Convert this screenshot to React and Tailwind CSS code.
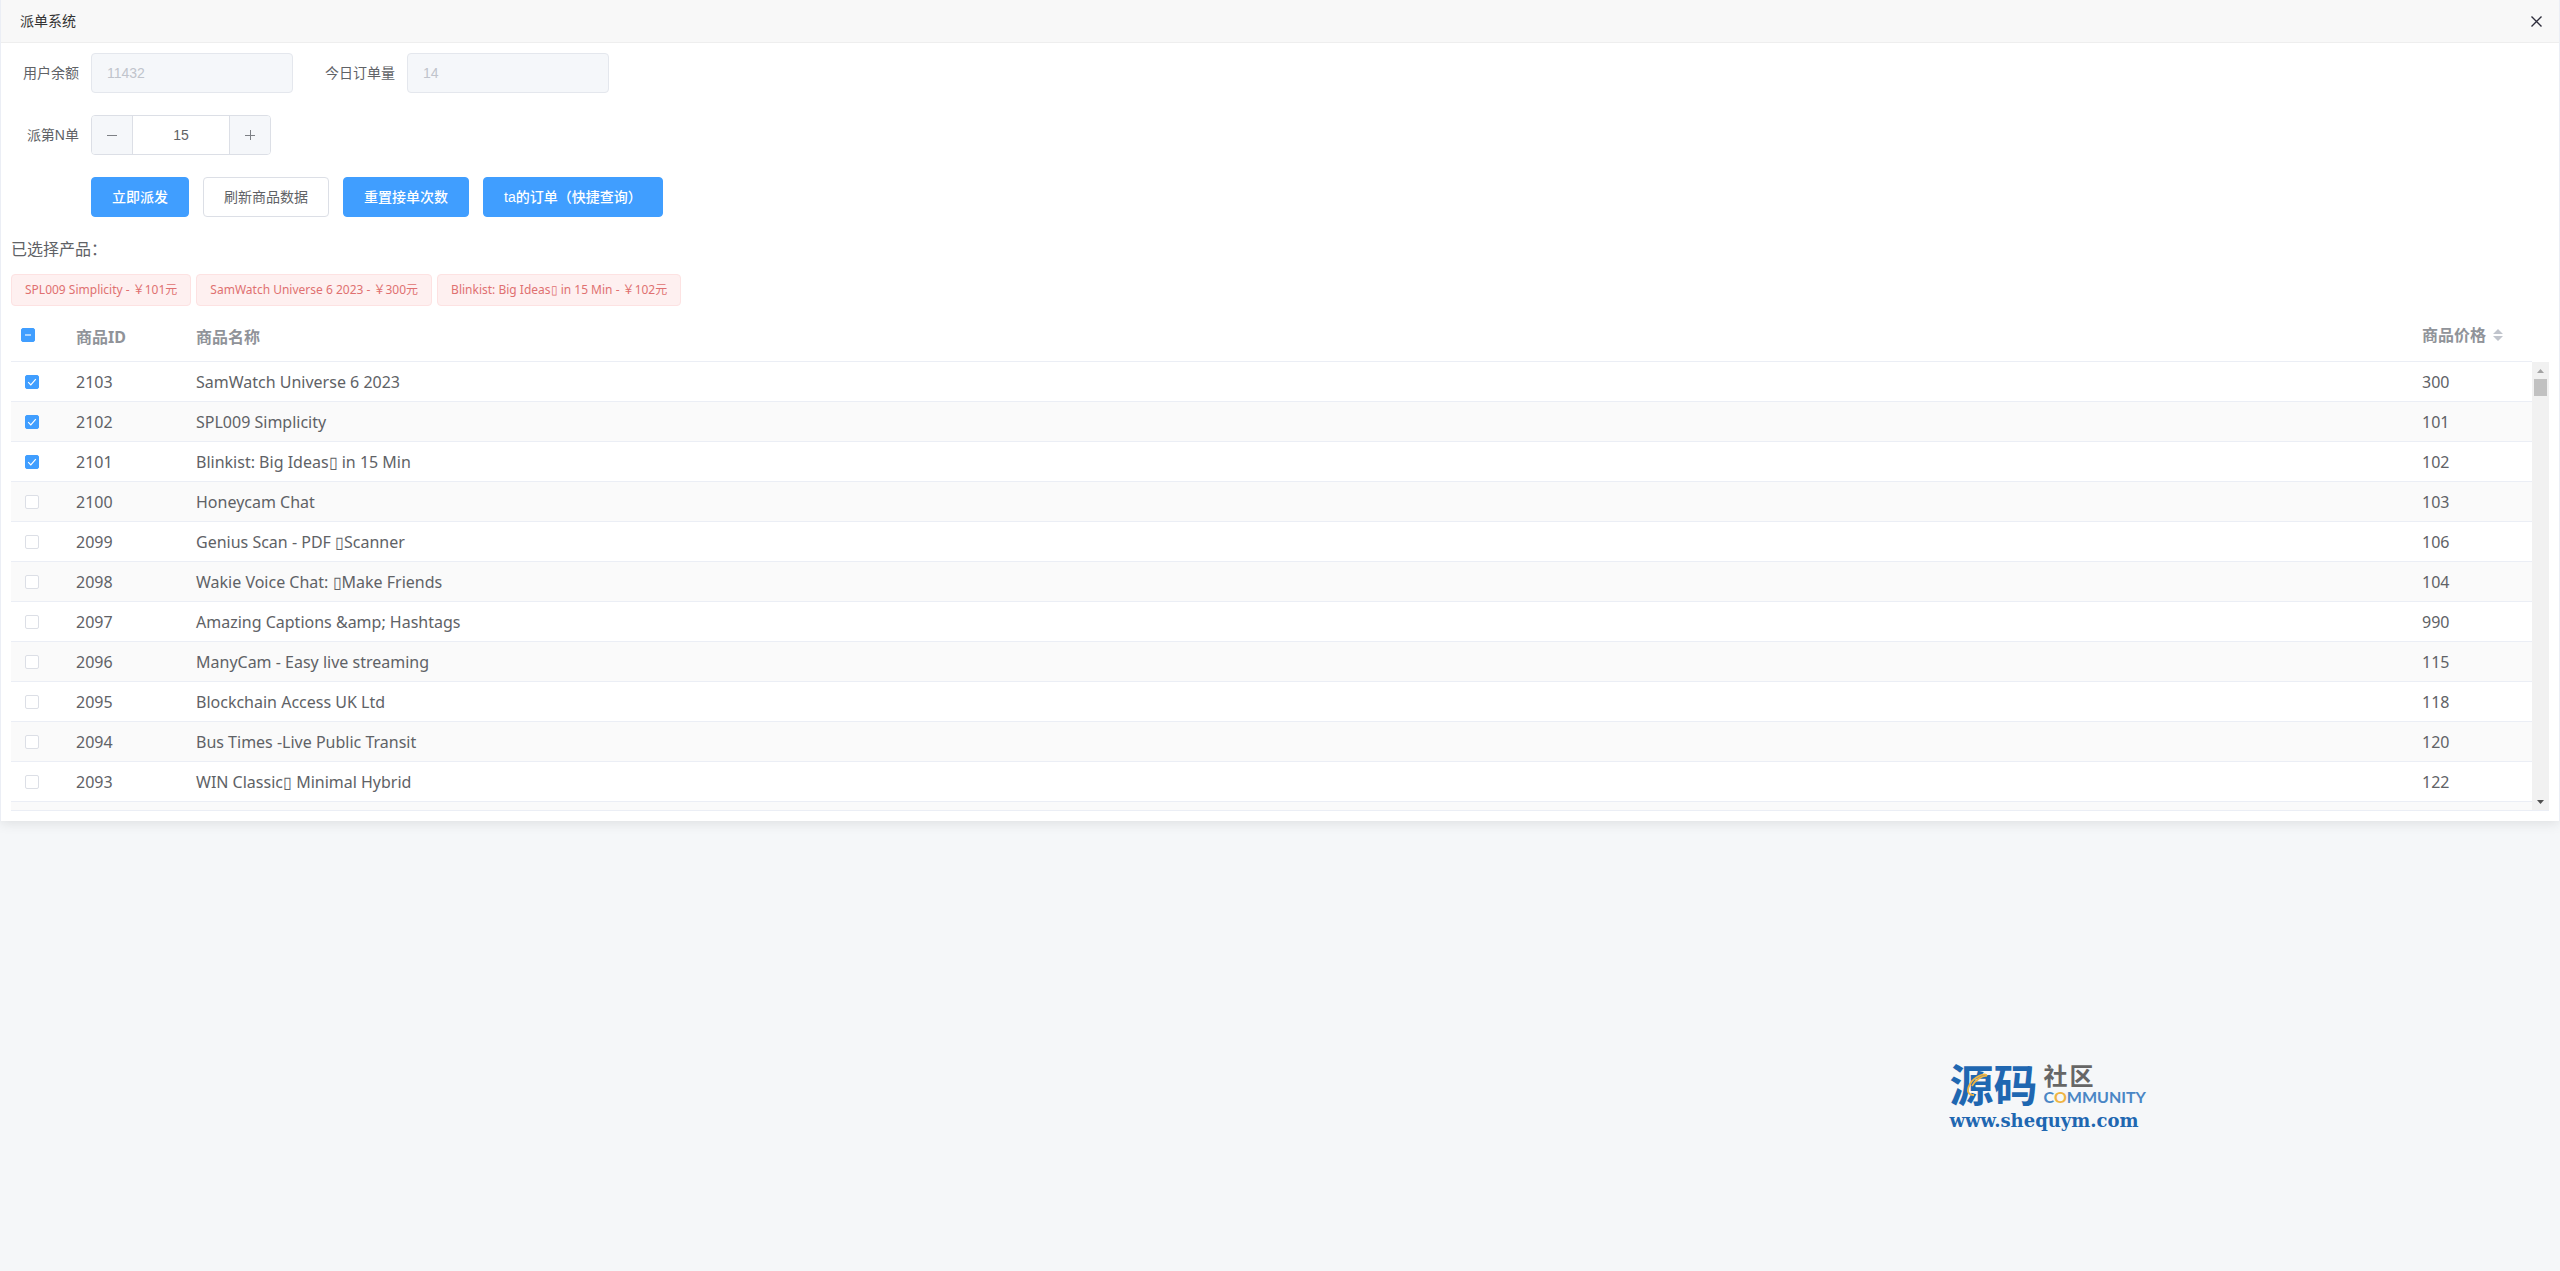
import React, { useState } from 'react';

const products = [
  { id: 2103, name: 'SamWatch Universe 6 2023', price: 300 },
  { id: 2102, name: 'SPL009 Simplicity', price: 101 },
  { id: 2101, name: 'Blinkist: Big Ideas▯ in 15 Min', price: 102 },
  { id: 2100, name: 'Honeycam Chat', price: 103 },
  { id: 2099, name: 'Genius Scan - PDF ▯Scanner', price: 106 },
  { id: 2098, name: 'Wakie Voice Chat: ▯Make Friends', price: 104 },
  { id: 2097, name: 'Amazing Captions &amp; Hashtags', price: 990 },
  { id: 2096, name: 'ManyCam - Easy live streaming', price: 115 },
  { id: 2095, name: 'Blockchain Access UK Ltd', price: 118 },
  { id: 2094, name: 'Bus Times -Live Public Transit', price: 120 },
  { id: 2093, name: 'WIN Classic▯ Minimal Hybrid', price: 122 },
];

const Checkbox = ({ checked, indeterminate, onChange, label }) => {
  const on = checked || indeterminate;
  return (
    <span className="grid w-3.5 h-3.5">
      <input
        type="checkbox"
        aria-label={label}
        checked={checked}
        onChange={onChange}
        className={`col-start-1 row-start-1 appearance-none w-3.5 h-3.5 rounded-xs border ${
          on ? 'bg-[#409eff] border-[#409eff]' : 'bg-white border-[#dcdfe6]'
        }`}
      />
      {on && (
        <svg className="col-start-1 row-start-1 w-3.5 h-3.5 pointer-events-none" viewBox="0 0 14 14" fill="none" stroke="white">
          {indeterminate ? (
            <path d="M4 7h6" strokeWidth="1.4" opacity="0.8" />
          ) : (
            <path d="M3.2 7.2l2.6 2.6 5-5.6" strokeWidth="1.2" />
          )}
        </svg>
      )}
    </span>
  );
};

const Logo = () => (
  <a href="#" className="flex flex-col text-[#1f67b1]">
    <span className="flex items-start gap-1.5">
      <span className="relative text-[44px] leading-11 font-bold">
        源码
        <svg className="absolute left-4 top-2 w-6 h-7" viewBox="0 0 24 28" fill="none" stroke="#efb443" strokeWidth="1.8">
          <path d="M21 3C19-1 8 4 4 11c-4 7-2 11 4 11M21 3C17 2 9 7 6 13" />
        </svg>
      </span>
      <span className="flex flex-col">
        <span className="flex gap-0.5 text-2xl leading-6 font-bold text-[#666]">
          <span>社</span>
          <span>区</span>
        </span>
        <span className="font-['Lato'] text-base leading-4 font-bold text-[#4a86c5]">
          C<span className="text-[#efb443]">O</span>MMUNITY
        </span>
      </span>
    </span>
    <span className="font-['DejaVu_Serif'] text-lg leading-6 font-bold">www.shequym.com</span>
  </a>
);

const primaryButton = 'h-10 px-5 rounded bg-[#409eff] border border-[#409eff] text-white font-medium';

const App = () => {
  const [count, setCount] = useState(15);
  const [selected, setSelected] = useState([2102, 2103, 2101]);

  const toggle = (id) =>
    setSelected(selected.includes(id) ? selected.filter((s) => s !== id) : [...selected, id]);

  const allChecked = selected.length === products.length;
  const toggleAll = () => setSelected(allChecked ? [] : products.map((p) => p.id));

  return (
    <div className="min-h-screen bg-[#f5f7f9] text-sm text-[#606266] font-['Liberation_Sans','Noto_Sans_CJK_SC',sans-serif]">
      <main className="bg-white border-x border-[#ebeef5] shadow-[0_2px_12px_0_rgba(0,0,0,0.1)]">
        {/* Title bar */}
        <header className="h-[43px] pl-[19px] pr-3.5 flex items-center justify-between bg-[#f8f8f8] border-b border-[#eee] text-[#333]">
          <h1>派单系统</h1>
          <button type="button" aria-label="关闭">
            <svg className="w-4 h-4" viewBox="0 0 16 16" fill="none" stroke="#2d2c3b" strokeWidth="1.4">
              <path d="M2.500 3.500l10 10M12.500 3.500l-10 10" />
            </svg>
          </button>
        </header>

        <div className="p-2.5">
          {/* Form */}
          <form className="flex flex-col gap-[22px]" onSubmit={(e) => e.preventDefault()}>
            <div className="flex items-center">
              <label htmlFor="balance" className="w-20 pr-3 text-right">用户余额</label>
              <input
                id="balance"
                disabled
                value="11432"
                className="w-[202px] h-10 px-[15px] rounded border border-[#e4e7ed] bg-[#f5f7fa] text-[#c0c4cc]"
              />
              <label htmlFor="orders" className="ml-8 pr-3">今日订单量</label>
              <input
                id="orders"
                disabled
                value="14"
                className="w-[202px] h-10 px-[15px] rounded border border-[#e4e7ed] bg-[#f5f7fa] text-[#c0c4cc]"
              />
            </div>

            <div className="flex items-center">
              <label htmlFor="nth" className="w-20 pr-3 text-right">派第N单</label>
              <div className="flex w-[180px] h-10 rounded border border-[#dcdfe6] overflow-hidden">
                <button
                  type="button"
                  aria-label="减少"
                  onClick={() => setCount(count - 1)}
                  className="w-[41px] shrink-0 flex items-center justify-center bg-[#f5f7fa] border-r border-[#dcdfe6]"
                >
                  <svg className="w-3 h-3" viewBox="0 0 12 12" stroke="#7d8085">
                    <path d="M1 6.5h10" />
                  </svg>
                </button>
                <input
                  id="nth"
                  value={count}
                  onChange={(e) => setCount(Number(e.target.value) || 0)}
                  className="min-w-0 flex-1 text-center"
                />
                <button
                  type="button"
                  aria-label="增加"
                  onClick={() => setCount(count + 1)}
                  className="w-[41px] shrink-0 flex items-center justify-center bg-[#f5f7fa] border-l border-[#dcdfe6]"
                >
                  <svg className="w-3 h-3" viewBox="0 0 12 12" stroke="#7d8085">
                    <path d="M1 6.5h10M6.5 1v10" />
                  </svg>
                </button>
              </div>
            </div>

            <div className="flex gap-3.5 pl-20">
              <button type="button" className={primaryButton}>立即派发</button>
              <button type="button" className="h-10 px-5 rounded border border-[#dcdfe6] bg-white">
                刷新商品数据
              </button>
              <button type="button" className={primaryButton}>重置接单次数</button>
              <button type="button" className={primaryButton}>ta的订单（快捷查询）</button>
            </div>
          </form>

          {/* Selected products */}
          <p className="mt-5 mb-[11px] text-base leading-[26px]">已选择产品：</p>
          <div className="flex gap-[5px] mb-[7px] font-['Noto_Sans','Noto_Sans_CJK_SC',sans-serif] text-xs">
            {selected.map((id) => {
              const product = products.find((p) => p.id === id);
              return (
                <span key={id} className="h-8 px-[13px] flex items-center rounded border border-[#fde2e2] bg-[#fef0f0] text-[#e07070] whitespace-pre">
                  {product.name} - ￥{product.price}元
                </span>
              );
            })}
          </div>

          {/* Product table */}
          <div className="flex h-[498px] overflow-hidden border-b border-[#ebeef5]">
            <div className="flex-1">
              <table className="w-full table-fixed text-left text-base font-['Noto_Sans','Noto_Sans_CJK_SC',sans-serif]">
                <thead>
                  <tr className="h-12 border-b border-[#ebeef5] text-[#909399]">
                    <th className="w-[55px] pl-2.5 pb-1">
                      <Checkbox label="全选" checked={allChecked} indeterminate={selected.length > 0 && !allChecked} onChange={toggleAll} />
                    </th>
                    <th className="w-30 pl-2.5 font-bold">商品ID</th>
                    <th className="pl-2.5 font-bold">商品名称</th>
                    <th className="w-30 pl-2.5 pb-1 font-bold">
                      <button type="button" className="flex items-center gap-[7px]">
                        商品价格
                        <svg className="w-2.5 h-3" viewBox="0 0 10 12" fill="#c0c4cc">
                          <path d="M5 0l5 5H0zM5 12l5-5H0z" />
                        </svg>
                      </button>
                    </th>
                  </tr>
                </thead>
                <tbody>
                  {products.map((p) => (
                    <tr key={p.id} className="h-10 border-b border-[#ebeef5] even:bg-[#fafafa]">
                      <td className="pt-0.5 pl-3.5">
                        <Checkbox label={p.name} checked={selected.includes(p.id)} onChange={() => toggle(p.id)} />
                      </td>
                      <td className="pt-0.5 pl-2.5">{p.id}</td>
                      <td className="pt-0.5 pl-2.5">{p.name}</td>
                      <td className="pt-0.5 pl-2.5">{p.price}</td>
                    </tr>
                  ))}
                  <tr className="h-10 bg-[#fafafa]">
                    <td colSpan={4}></td>
                  </tr>
                </tbody>
              </table>
            </div>
            {/* Scrollbar */}
            <div className="w-[17px] mt-[49px] flex flex-col items-center justify-between bg-[#f1f1f1]">
              <div className="flex flex-col items-center">
                <svg className="w-[17px] h-[17px]" viewBox="0 0 17 17" fill="#a3a3a3">
                  <path d="M5 11h7L8.500 7z" />
                </svg>
                <div className="w-[13px] h-[17px] bg-[#c1c1c1]"></div>
              </div>
              <svg className="w-[17px] h-[17px]" viewBox="0 0 17 17" fill="#505050">
                <path d="M5 7h7l-3.500 4z" />
              </svg>
            </div>
          </div>
        </div>
      </main>

      <footer className="flex justify-end pt-61 pr-[414px]">
        <Logo />
      </footer>
    </div>
  );
};

export default App;
